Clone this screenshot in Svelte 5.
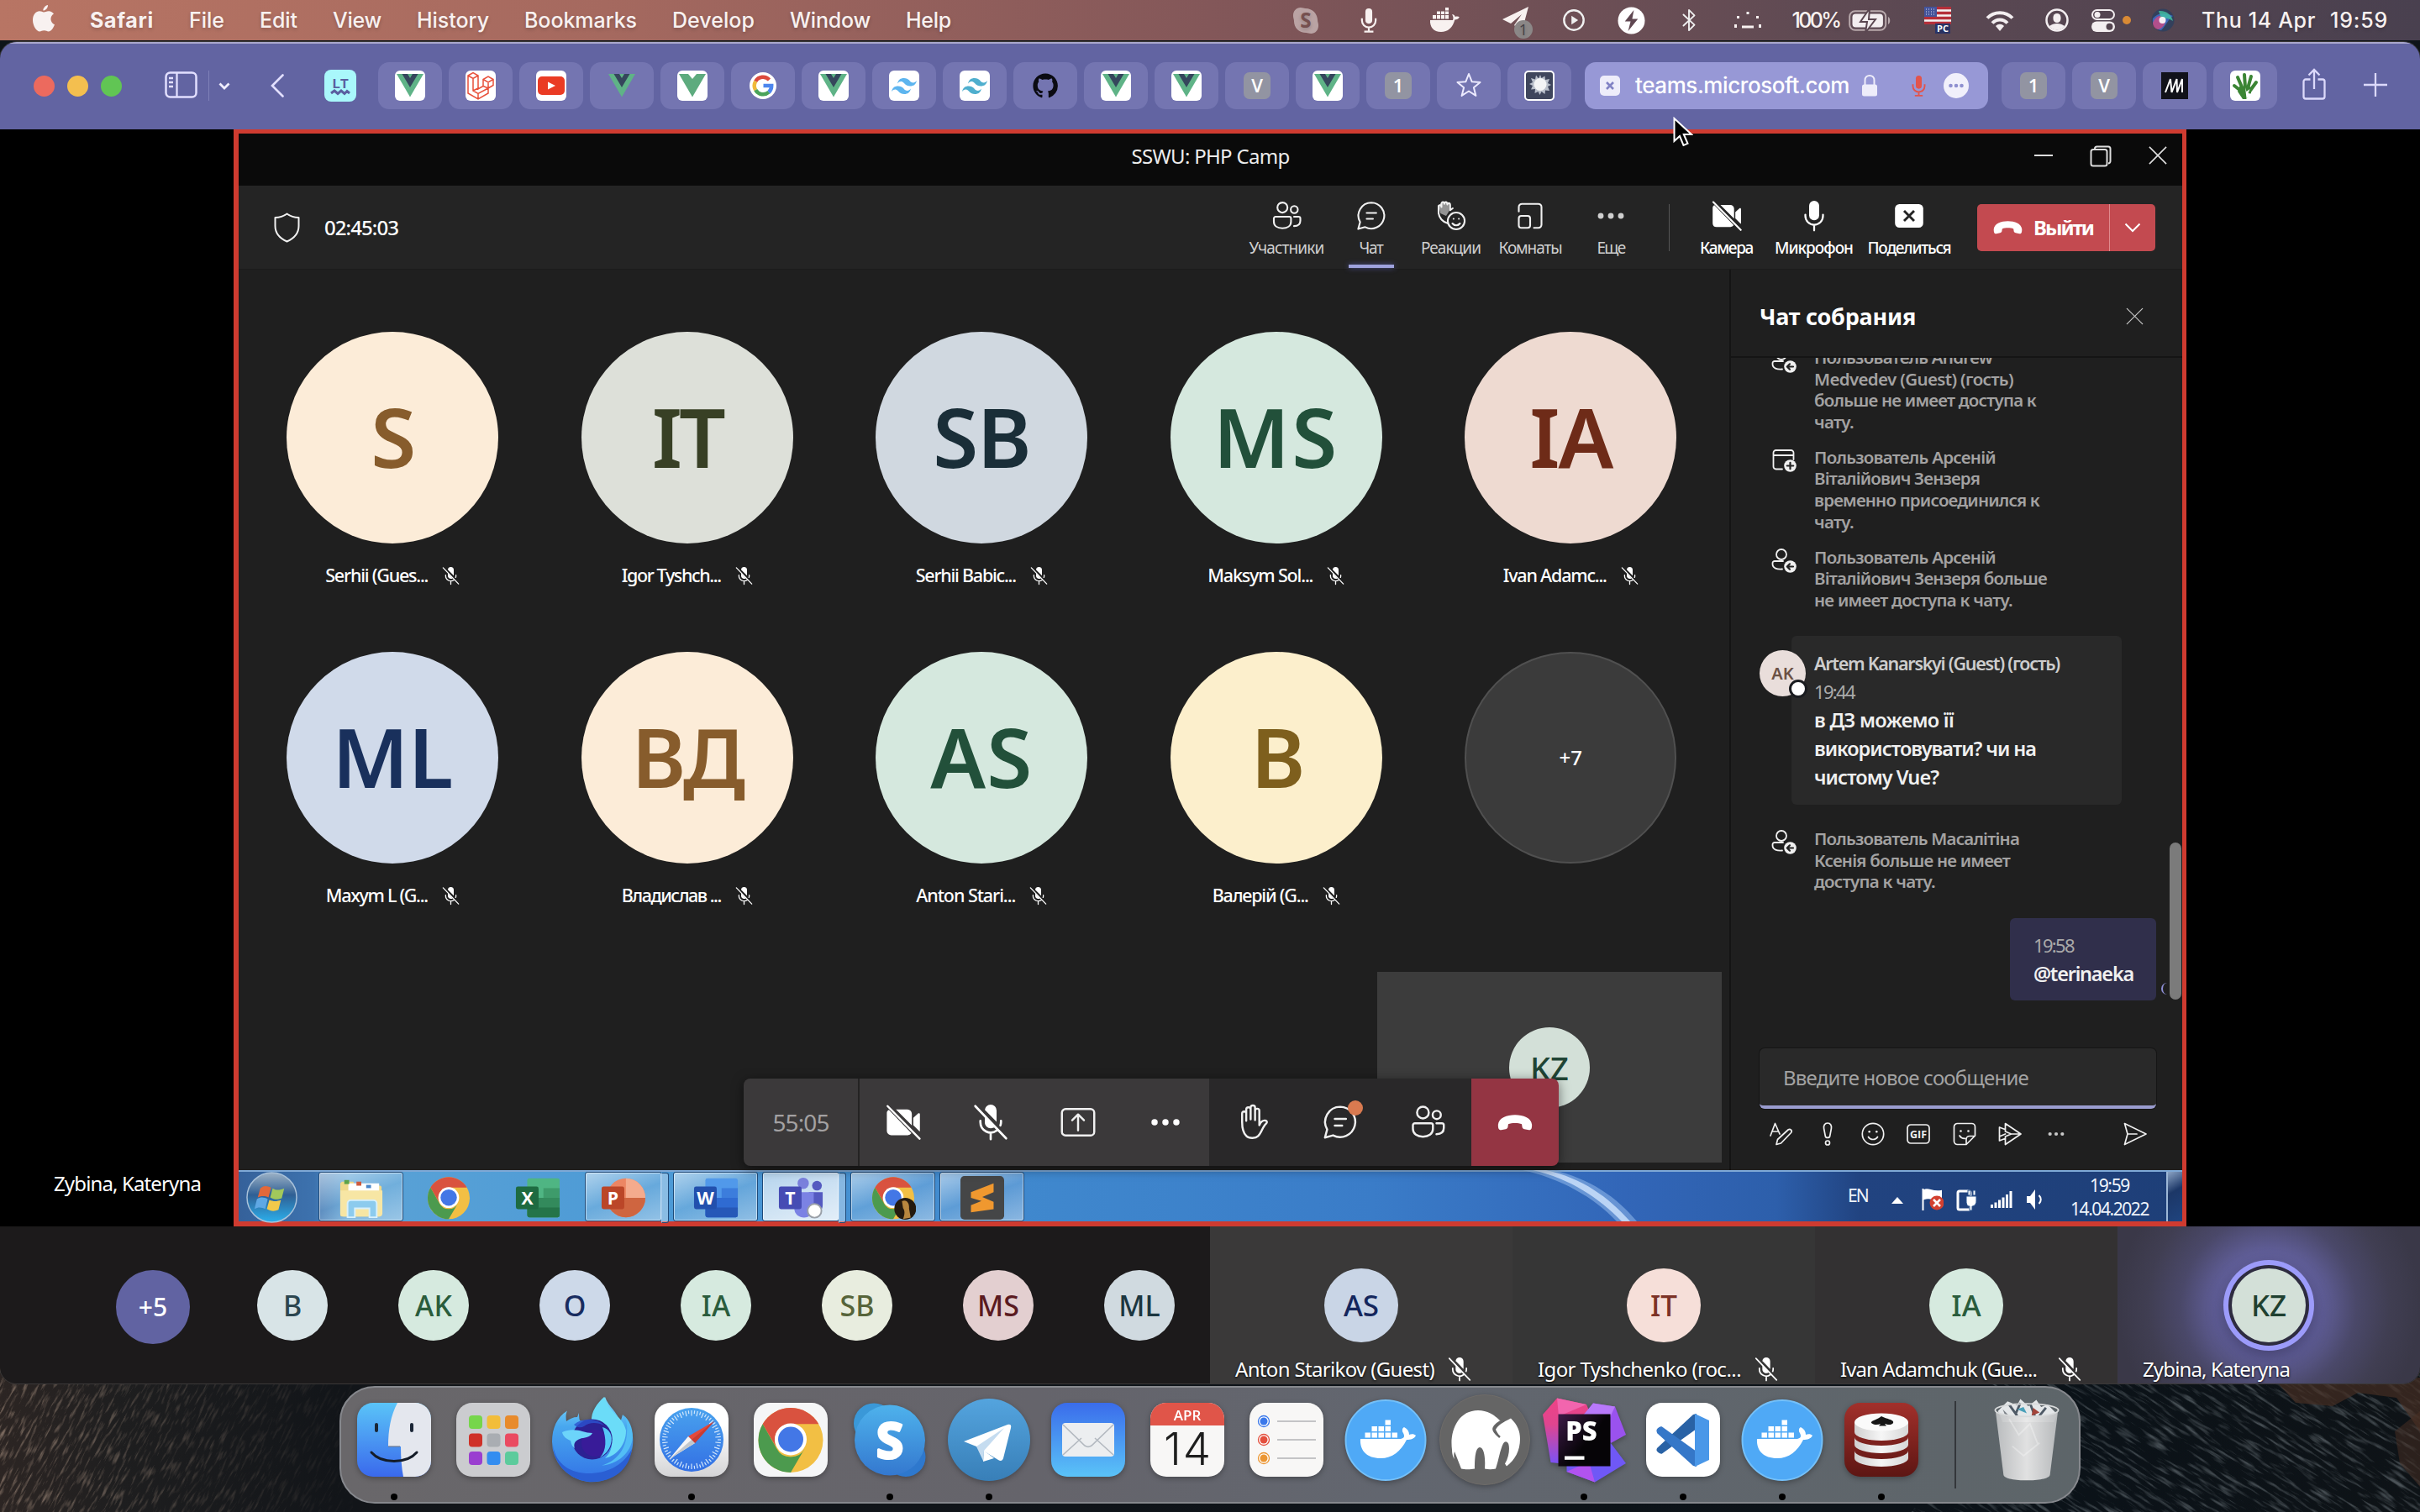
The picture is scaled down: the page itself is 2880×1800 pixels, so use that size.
<script>
  // Spreads a label over a known width by adjusting its letter spacing.
  function fit(node, width) {
    if (!width) return;
    const natural = node.getBoundingClientRect().width;
    const count = node.textContent.length;
    node.style.letterSpacing = `${((width - natural) / count).toFixed(3)}px`;
  }

  const menus = [
    ['File', 42], ['Edit', 45], ['View', 58], ['History', 86],
    ['Bookmarks', 134], ['Develop', 98], ['Window', 96], ['Help', 54]
  ];
  const extras = ['skypeBar', 'mic', 'dockerBar', 'telegramBar', 'playBar', 'boltBar', 'bluetooth', 'dotsFace'];

  const tabs = [
    'vue', 'laravel', 'youtube', 'vueBare', 'vueGreen', 'google', 'vue', 'tailwind', 'tailwindTeal',
    'github', 'vue', 'vue', 'letterV', 'vue', 'letter1', 'star', 'spark'
  ];
  const tabsAfter = ['letter1', 'letterV', 'medium', 'hand'];

  const meetingActions = [
    { icon: 'people', label: 'Участники', w: 89, slot: 100 },
    { icon: 'chat', label: 'Чат', w: 28, slot: 101, active: true },
    { icon: 'reactions', label: 'Реакции', w: 71, slot: 89 },
    { icon: 'rooms', label: 'Комнаты', w: 75, slot: 100 },
    { icon: 'more', label: 'Еще', w: 33, slot: 92 }
  ];
  const deviceActions = [
    { icon: 'cameraOff', label: 'Камера', w: 63, slot: 91 },
    { icon: 'mic', label: 'Микрофон', w: 93, slot: 117 },
    { icon: 'shareX', label: 'Поделиться', w: 99, slot: 110 }
  ];

  const people = [
    { i: 'S', n: 'Serhii (Gues...', w: 122, iw: 52, bg: '#fcecd8', fg: '#875c2c' },
    { i: 'IT', n: 'Igor Tyshch...', w: 118, iw: 84, bg: '#dde0d9', fg: '#384025' },
    { i: 'SB', n: 'Serhii Babic...', w: 119, iw: 116, bg: '#d0d8e0', fg: '#1a2e38' },
    { i: 'MS', n: 'Maksym Sol...', w: 125, iw: 150, bg: '#d5e8de', fg: '#22503a' },
    { i: 'IA', n: 'Ivan Adamc...', w: 123, iw: 98, bg: '#eedad1', fg: '#6e2b18' },
    { i: 'ML', n: 'Maxym L (G...', w: 121, iw: 144, bg: '#d0daea', fg: '#19305c' },
    { i: 'ВД', n: 'Владислав ...', w: 118, iw: 132, bg: '#fcecd8', fg: '#875c2c' },
    { i: 'AS', n: 'Anton Stari...', w: 118, iw: 122, bg: '#d5e8de', fg: '#22503a' },
    { i: 'В', n: 'Валерій (G...', w: 114, iw: 60, bg: '#fcefcc', fg: '#7e5f1d' }
  ];

  const left = { icon: 'personLeft' };
  const log = [
    { ...left, lines: [['Пользователь Andrew', 212], ['Medvedev (Guest) (гость)', 237], ['больше не имеет доступа к', 264], ['чату.', 47]] },
    { icon: 'calendarAdd', lines: [['Пользователь Арсеній', 216], ['Віталійович Зензеря', 197], ['временно присоединился к', 268], ['чату.', 47]] },
    { ...left, lines: [['Пользователь Арсеній', 216], ['Віталійович Зензеря больше', 277], ['не имеет доступа к чату.', 236]] }
  ];
  const lastLog = { ...left, lines: [['Пользователь Масалітіна', 244], ['Ксенія больше не имеет', 233], ['доступа к чату.', 144]] };
  const composer = ['format', 'important', 'smile', 'gif', 'sticker', 'stream', 'more'];

  const strip = [
    { i: 'B', bg: '#d8e4e7', fg: '#2c4650' }, { i: 'AK', bg: '#d6eadf', fg: '#2a5c3c' },
    { i: 'O', bg: '#cdd9e9', fg: '#182c60' }, { i: 'IA', bg: '#d6eadf', fg: '#2a5c3c' },
    { i: 'SB', bg: '#e8eddf', fg: '#56643a' }, { i: 'MS', bg: '#e3cfd0', fg: '#5a1a20' },
    { i: 'ML', bg: '#d0dae0', fg: '#1c3640' }
  ];
  const tiles = [
    { i: 'AS', n: 'Anton Starikov (Guest)', w: 237, bg: '#c9d5e6', fg: '#14265c' },
    { i: 'IT', n: 'Igor Tyshchenko (гос...', w: 242, bg: '#f6dfd9', fg: '#7c3226' },
    { i: 'IA', n: 'Ivan Adamchuk (Gue...', w: 234, bg: '#d6eadf', fg: '#2a5c3c', wide: true },
    { i: 'KZ', n: 'Zybina, Kateryna', w: 175, bg: '#d3e0d8', fg: '#1f4030', speaking: true }
  ];

  const dock = [
    ['finder', 1], ['launchpad', 0], ['firefox', 0], ['safari', 1], ['chrome', 0], ['skype', 1], ['telegram', 1],
    ['mail', 0], ['calendar', 0], ['reminders', 0], ['docker', 0], ['elephant', 0], ['phpstorm', 1],
    ['vscode', 1], ['docker', 1], ['database', 1]
  ];
  const launchColors = ['#76d64b', '#f2bd3a', '#e88b2c', '#cf3128', '#a9adb2', '#ea4a61', '#9a3fd0', '#338df0', '#5ccb9c'];
  const ticks = Array.from({ length: 60 }, (_, k) => k * 6);
  const crates = [[19.5, 35.5], [27.5, 35.5], [35.5, 35.5], [43.5, 35.5], [51.5, 35.5], [27.5, 28], [35.5, 28], [43.5, 28], [43.5, 20.5]];
</script>

{#snippet label(text, w, cls = '')}
  <span class="label {cls}" use:fit={w}>{text}</span>
{/snippet}

{#snippet icon(name)}
  {#if name === 'people'}
    <svg class="icon line" viewBox="0 0 24 24"><circle cx="8.8" cy="5.4" r="4" /><circle cx="18.2" cy="7" r="2.8" /><path d="M3.3 12.7h11a1.3 1.3 0 0 1 1.3 1.3v2.6c0 3.4-3 5.2-6.8 5.2S2 20 2 16.600V14a1.300 1.300 0 0 1 1.300-1.300z" /><path d="M18 12.700h3.700a1.300 1.300 0 0 1 1.300 1.300v1.900c0 2.800-2 4.200-5 4.200" /></svg>
  {:else if name === 'chat'}
    <svg class="icon line" viewBox="0 0 24 24"><path d="M12 1.500a10.300 10.300 0 1 1-4.900 19.400L1.600 22.400l1.500-5.500A10.300 10.300 0 0 1 12 1.500zM8.300 9.700h7.600M8.300 14.300h5" /></svg>
  {:else if name === 'reactions'}
    <svg class="icon line" viewBox="0 0 24 24"><path class="soft" d="M2 3.500 4 2l2-1 2 .5 2.500 1V8L8 12l-4.500-2z" /><path d="M9.500 18C5.500 17 2 13.500 2 9V4M2 5c0-2 2.300-2 2.300 0V2.500c0-2 2.300-2 2.300 0 0-2 2.400-2 2.400.5 0-1.500 2.200-1.500 2.200.5v4l2-1.500" /><circle cx="16" cy="16" r="6.700" /><path d="M13 18c1.500 2 4.500 2 6 0" /><circle class="full" cx="13.900" cy="14.300" r=".7" /><circle class="full" cx="18.100" cy="14.300" r=".7" /></svg>
  {:else if name === 'rooms'}
    <svg class="icon line" viewBox="0 0 24 24"><path d="M3 8.500V5a2.500 2.500 0 0 1 2.500-2.500h13A2.500 2.500 0 0 1 21 5v14a2.500 2.500 0 0 1-2.500 2.500H15" /><rect x="3" y="12" width="9" height="9.500" rx="2" /></svg>
  {:else if name === 'more'}
    <svg class="icon" viewBox="0 0 24 24"><circle cx="4" cy="12" r="2.300" /><circle cx="12" cy="12" r="2.300" /><circle cx="20" cy="12" r="2.300" /></svg>
  {:else if name === 'cameraOff'}
    <svg class="icon" viewBox="0 0 24 24"><path d="M2.200 3.500 17.500 19.400a3 3 0 0 1-2.600 1.400H3.800A3 3 0 0 1 .8 18V5.500c0-.8.500-1.500 1.400-2zM7 3.300h7.800a3 3 0 0 1 3 3v7.900zM18.800 9l3.300-3c.5-.4 1.200-.1 1.200.6v11c0 .3-.1.500-.2.700l-4.300-4.300z" /><path class="slash" d="m1.300 1 21.800 22.200" /></svg>
  {:else if name === 'mic'}
    <svg class="icon" viewBox="0 0 24 24"><rect x="8" y="0" width="8" height="15.500" rx="4" /><path class="stroke" d="M5 11v1a7 7 0 0 0 14 0v-1M12 19v4.500" /></svg>
  {:else if name === 'micBar'}
    <svg class="icon" viewBox="0 0 24 32"><rect x="7.500" y="0" width="9" height="20" rx="4.500" /><path d="M3 13v3a9 9 0 0 0 18 0v-3M12 25v5.500M6 30.500h12" fill="none" stroke="currentColor" stroke-width="2.400" /></svg>
  {:else if name === 'micOff'}
    <svg class="icon" viewBox="0 0 24 24"><path d="M8 4a4 4 0 0 1 8 0v7.700L8.300 3.900zM8 8.600l6.700 6.700c-3 2-6.700 0-6.700-3.300z" /><path class="stroke" d="M5 11v1a7 7 0 0 0 11.200 5.600M19 11v1c0 .8-.1 1.500-.4 2.200M12 19v4.500M1.500 1l21 22" /></svg>
  {:else if name === 'shareX'}
    <svg class="icon" viewBox="0 0 24 24"><rect x=".8" y="2.600" width="22.400" height="18.800" rx="3.500" /><path class="cut" d="m8 8 8 8M16 8l-8 8" /></svg>
  {:else if name === 'shareUp'}
    <svg class="icon line" viewBox="0 0 24 24"><rect x="1" y="3" width="22" height="18" rx="2.500" /><path d="M12 17.500V7M8 10.700 12 6.700l4 4" /></svg>
  {:else if name === 'raise'}
    <svg class="icon line" viewBox="0 0 24 24"><path d="M4.700 12V6.200c0-2 2.800-2 2.800 0V11 3.300c0-2 3-2 3 0V10 2c0-1.900 3-1.900 3 0v8.500-6.300c0-1.900 2.900-1.900 2.900 0V14c.8-1.900 2.200-3.400 4-3.200 1.400.2 1.500 1.400.5 2.300-2.400 2.200-3 6.200-5.300 8.300-1.600 1.600-6 2-8 0-2-2-2.900-5.400-2.900-9.400z" /></svg>
  {:else if name === 'phone'}
    <svg class="icon" viewBox="0 0 24 24"><path d="M12 7C6.500 7 1 9 .5 13.500c-.1 1.600.3 2.800.3 2.800.3.8 1 1.100 1.800 1l3-.6c.8-.1 1.400-.7 1.500-1.400l.3-2c2.400-1 6.800-1 9.200 0l.3 2c.1.700.7 1.300 1.500 1.400l3 .6c.8.100 1.500-.2 1.800-1 0 0 .4-1.200.3-2.800C23 9 17.500 7 12 7z" /></svg>
  {:else if name === 'personLeft'}
    <svg class="icon line" viewBox="0 0 30 30"><circle cx="12" cy="7" r="6" /><path d="M13 24.500C7 25 1.500 23.500 1.500 18.500v-1A2.500 2.500 0 0 1 4 15h10" /><circle class="full" cx="22.500" cy="21.500" r="7.300" /><path class="cut" d="M26 21.500h-7m3-3.200-3.200 3.200 3.200 3.200" /></svg>
  {:else if name === 'calendarAdd'}
    <svg class="icon line" viewBox="0 0 30 30"><path d="M13 24.500H5.500A3 3 0 0 1 2.500 21.500V5A3 3 0 0 1 5.500 2h18a3 3 0 0 1 3 3v8M2.500 8h24" /><circle class="full" cx="22.500" cy="20.500" r="7.300" /><path class="cut" d="M22.500 16.800v7.400m-3.700-3.700h7.400" /></svg>
  {:else if name === 'format'}
    <svg class="icon line" viewBox="0 0 28 28"><path d="M1 16 6.500 1.500 12 14M3.200 11h7.500M8 26.500l1.500-6L22 9c2.500-2 5.500 1 3.500 3.500L13.500 25z" /></svg>
  {:else if name === 'important'}
    <svg class="icon line" viewBox="0 0 28 28"><path d="M14 1c3.500 0 5 3 4.400 6.500l-1.700 9c-.5 2.600-4.900 2.600-5.400 0l-1.700-9C9 4 10.500 1 14 1z" /><circle cx="14" cy="24.500" r="2.500" /></svg>
  {:else if name === 'smile'}
    <svg class="icon line" viewBox="0 0 28 28"><circle cx="14" cy="14" r="12.700" /><path d="M8.500 17.500c2.500 4 8.500 4 11 0" /><circle class="full" cx="9.700" cy="11.300" r="1.300" /><circle class="full" cx="18.300" cy="11.300" r="1.300" /></svg>
  {:else if name === 'gif'}
    <svg class="icon line" viewBox="0 0 28 28"><rect x="1" y="3" width="26" height="22" rx="4" /><text class="svgtext" x="14" y="18.500" font-size="12.500" font-weight="700" textLength="20">GIF</text></svg>
  {:else if name === 'sticker'}
    <svg class="icon line" viewBox="0 0 28 28"><path d="M16 26.500H5.500A4 4 0 0 1 1.500 22.500V5.500A4 4 0 0 1 5.500 1.500h17a4 4 0 0 1 4 4V16zM26 16.500h-6a4 4 0 0 0-4 4V26M8 16c1.500 2.500 4 3.500 6.500 3.300" /><circle class="full" cx="9.500" cy="10.500" r="1.300" /><circle class="full" cx="18.500" cy="10.500" r="1.300" /></svg>
  {:else if name === 'stream'}
    <svg class="icon line" viewBox="0 0 28 28"><path d="M8.500 11V1.500L27 14 8.500 26.500V17l7-3H26M15.500 14 8.500 11M8 8.500 1.500 6v16l6.500-2.500M1.500 17l7-3" /></svg>
  {:else if name === 'send'}
    <svg class="icon line" viewBox="0 0 28 28"><path d="M1.500 1.500 27 14 1.500 26.500 5 14zM5 14h11" /></svg>
  {:else if name === 'shield'}
    <svg class="icon line" viewBox="0 0 32 36"><path d="M16 1.500c4 3 8.500 4.500 14 4.500v10c0 9-5 14.500-14 18.500C7 30.500 2 25 2 16V6c5.500 0 10-1.500 14-4.500z" /></svg>
  {:else if name === 'close'}
    <svg class="icon line" viewBox="0 0 24 24"><path d="m1.500 1.500 21 21M22.500 1.500l-21 21" /></svg>
  {:else if name === 'skypeBar'}
    <svg class="icon" viewBox="0 0 34 34"><path d="M10 1c3 0 4 1 6 1 9 0 15 7 15 15 0 2 1 3 1 6 0 6-4 10-9 10-3 0-4-1-6-1C8 32 2 26 2 17c0-2-1-3-1-6C1 5 5 1 10 1z" opacity=".5" /><text class="svgtext dim" x="16.500" y="26" font-size="25" font-weight="700">S</text></svg>
  {:else if name === 'dockerBar'}
    <svg class="icon" viewBox="0 0 36 30"><path d="M1 15h27c1-2 .5-5-1-6.500 1.500-.8 3 .2 3.800 2.500 1.500-.6 4-.5 5 .2-1 2.300-3 3.200-5.500 3.300C28 24 22 29 14 29 5 29 .5 23 1 15z" /><path d="M4 9h4v4.500H4zM9 9h4v4.500H9zM14 9h4v4.500h-4zM19 9h4v4.500h-4zM9 4.500h4V8H9zM14 4.500h4V8h-4zM19 4.500h4V8h-4zM19 0h4v3.500h-4z" /></svg>
  {:else if name === 'telegramBar'}
    <svg class="icon" viewBox="0 0 40 40"><path d="M2 16 33 1 25 31l-9-8 9-13-13 11z" /><circle cx="27" cy="28" r="11" fill="#8b8787" /><text class="svgtext" x="27" y="34.500" font-size="18" fill="#443f45">1</text></svg>
  {:else if name === 'playBar'}
    <svg class="icon line" viewBox="0 0 30 30"><circle cx="15" cy="15" r="12.500" stroke-width="2.600" /><path class="full" d="m12 9.500 8.500 5.500-8.500 5.500z" /></svg>
  {:else if name === 'boltBar'}
    <svg class="icon" viewBox="0 0 34 34"><circle cx="17" cy="17" r="16.500" fill="#fff" /><path d="m20 4-11 14h7l-3 12L25 15h-7z" fill="#5f4751" /></svg>
  {:else if name === 'bluetooth'}
    <svg class="icon line" viewBox="0 0 20 30"><path d="m3 8 14 13-7 7V2l7 7L3 22" stroke-width="2" /></svg>
  {:else if name === 'dotsFace'}
    <svg class="icon" viewBox="0 0 32 20"><path d="M9 16.500h14v3H9zM0 15h3v4H0zM29 15h3v4h-3zM3 5h3v3H3zM26 5h3v3h-3zM14.500 0h3v3h-3z" /></svg>
  {:else if name === 'vue' || name === 'vueBare' || name === 'vueGreen'}
    <svg class="fav" viewBox="0 0 36 36">
      {#if name !== 'vueBare'}<rect width="36" height="36" rx="6" fill="#fff" />{/if}
      <path d="M2 4h32L18 31.500z" fill={name === 'vueGreen' ? '#5dab7e' : '#5fb387'} />
      {#if name === 'vueGreen'}<path d="M13 4h10l-5 6z" fill="#fff" />{:else}<path d="M8.500 4H15l3 5 3-5h6.500L18 20z" fill="#35465c" />{/if}
    </svg>
  {:else if name === 'laravel'}
    <svg class="fav" viewBox="0 0 36 36"><rect width="36" height="36" rx="6" fill="#fff" /><path d="m3 6 6-3.500L15 6v16l6-3.500v-8l6-3.500 6 3.500v7L27 21v6l-12 7-12-7zM3 6l6 3.500L15 6M9 9.500V24l6 3.500L27 21M21 10.500l6 3.500 6-3.500M27 14v7M15 34v-6.500M9 24l6-3M21 18.500l6 2.500" fill="none" stroke="#e8503a" stroke-width="1.500" /></svg>
  {:else if name === 'youtube'}
    <svg class="fav" viewBox="0 0 36 36"><rect width="36" height="36" rx="6" fill="#fff" /><rect x="2" y="7" width="32" height="22" rx="5" fill="#ea3b24" /><path d="m14 13.500 9 4.500-9 4.500z" fill="#fff" /></svg>
  {:else if name === 'google'}
    <svg class="fav" viewBox="0 0 36 36"><circle cx="18" cy="18" r="16" fill="#fff" /><g fill="none" stroke-width="4.500"><path d="M25.500 11A10.300 10.300 0 0 0 9.200 12.800" stroke="#dc4a3d" /><path d="M9.200 12.800a10.300 10.300 0 0 0 0 10.400" stroke="#f0b93a" /><path d="M9.200 23.200a10.300 10.300 0 0 0 15.800 2.500" stroke="#4ba35a" /><path d="M18.500 18h9.700c0 3.500-1.200 6-3.200 7.700" stroke="#4d86ee" /></g></svg>
  {:else if name === 'tailwind' || name === 'tailwindTeal'}
    <svg class="fav" viewBox="0 0 36 36"><rect width="36" height="36" rx="6" fill="#fff" /><g fill={name === 'tailwind' ? '#5db5ef' : '#4fafce'}><path d="M10 15.500c1-4.500 3.700-6.500 7.800-6.500 6.200 0 6.700 4.500 9.700 5.300 2 .5 4-.3 5.500-2.300-1 4.500-3.700 6.500-7.800 6.500-6.200 0-6.700-4.500-9.700-5.300-2-.5-4 .3-5.500 2.300z" /><path d="M3 25c1-4.500 3.700-6.500 7.800-6.500 6.200 0 6.700 4.500 9.700 5.300 2 .5 4-.3 5.500-2.300-1 4.500-3.700 6.500-7.800 6.500-6.200 0-6.700-4.500-9.700-5.300-2-.5-4 .3-5.500 2.300z" /></g></svg>
  {:else if name === 'github'}
    <svg class="fav" viewBox="0 0 16 16"><path transform="translate(1.500 1.500) scale(.82)" fill="#0b0b12" d="M8 0C3.580 0 0 3.580 0 8c0 3.540 2.290 6.530 5.470 7.590.4.070.55-.17.55-.38 0-.19-.01-.82-.01-1.490-2.010.37-2.530-.49-2.690-.94-.09-.23-.48-.94-.82-1.130-.28-.15-.68-.52-.01-.53.63-.01 1.080.58 1.230.82.72 1.210 1.870.87 2.330.66.07-.52.28-.87.51-1.070-1.780-.2-3.640-.89-3.640-3.950 0-.87.31-1.590.82-2.150-.08-.2-.36-1.020.08-2.120 0 0 .67-.21 2.200.82.640-.18 1.320-.27 2-.27s1.360.09 2 .27c1.530-1.040 2.200-.82 2.200-.82.440 1.100.16 1.920.08 2.120.510.560.820 1.270.820 2.150 0 3.070-1.870 3.750-3.650 3.950.290.250.540.730.540 1.480 0 1.070-.01 1.930-.01 2.200 0 .210.150.460.550.380A8.010 8.010 0 0 0 16 8c0-4.420-3.580-8-8-8z" /></svg>
  {:else if name === 'letterV' || name === 'letter1'}
    <svg class="fav" viewBox="0 0 36 36"><rect x="2" y="2" width="32" height="32" rx="7" fill="#9294a2" /><text class="svgtext light" x="18" y="26" font-size="22" font-weight="600">{name === 'letterV' ? 'V' : '1'}</text></svg>
  {:else if name === 'star'}
    <svg class="fav" viewBox="0 0 36 36"><path d="m18 4 3.700 9.300 9.800.6-7.600 6.300 2.500 9.700L18 24.500l-8.400 5.400 2.500-9.700-7.600-6.300 9.800-.6z" fill="none" stroke="#eceaff" stroke-width="2" stroke-linejoin="round" /></svg>
  {:else if name === 'spark'}
    <svg class="fav" viewBox="0 0 36 36"><rect x="1" y="1" width="34" height="34" rx="4" fill="#3f465c" stroke="#fff" stroke-width="2" /><path d="m19 5 1.500 4 4-2.500L25 11l5-1-2 5 4 2-4 2 2 5-5-.5-.5 4.500-4-3-2 4-2-4-4 2 .5-5-5 .5 2-4.500L6 16l4-2-2-5 5 1.500 1-5 3 4z" fill="#b9bfca" /><circle cx="19" cy="16.500" r="7.500" fill="#f3f4f5" /></svg>
  {:else if name === 'medium'}
    <svg class="fav" viewBox="0 0 36 36"><rect x="2" y="2" width="32" height="32" fill="#11121a" /><path d="m7 26 6-16 1.500 16 6-16 .5 16 6-16v16" fill="none" stroke="#fff" stroke-width="2" stroke-linejoin="bevel" /></svg>
  {:else if name === 'hand'}
    <svg class="fav" viewBox="0 0 36 36"><rect width="36" height="36" rx="6" fill="#fff" /><g fill="none" stroke="#3b8534" stroke-width="4" stroke-linecap="round"><path d="M15 22 9 8M18 20 17 5M21 21l4-14M23 25l8-11M14 25l-9-7" /></g><path d="M11 19h13l1 8-6 7h-4l-6-9z" fill="#3b8534" /><path d="m18 20 1.500 5 4-3-2 5 5 1-7 5z" fill="#fff" /></svg>
  {/if}
{/snippet}

{#snippet chromeMark()}
  <circle cx="44" cy="44.500" r="38.500" fill="#f2bf44" />
  <path d="M10.700 25.200A38.500 38.500 0 0 1 77.300 25.200H44a19.300 19.300 0 0 0-17 28z" fill="#d9523f" />
  <path d="M10.700 25.200A38.500 38.500 0 0 0 44 83l17-29a19 19 0 0 1-34 0z" fill="#4c9a4e" />
  <circle cx="44" cy="43.500" r="19" fill="#fff" /><circle cx="44" cy="43.500" r="15" fill="#4377e6" />
{/snippet}

{#snippet office(letter, dark, a, b)}
  <svg class="task-icon" viewBox="0 0 56 52">
    <rect x="15" y="2" width="40" height="48" rx="2.500" fill={a} /><path d="M15 26h40v21.500a2.500 2.500 0 0 1-2.500 2.500h-35a2.500 2.500 0 0 1-2.500-2.500z" fill={b} /><path d="M35 14h20v12H35z" fill={b} opacity=".6" /><path d="M15 38h40v9.500a2.500 2.500 0 0 1-2.500 2.500h-35a2.500 2.500 0 0 1-2.500-2.500z" fill={dark} opacity=".7" />
    <rect x="1" y="12" width="28" height="28" rx="2.500" fill={dark} /><text class="svgtext light" x="15" y="34" font-size="22" font-weight="700">{letter}</text>
  </svg>
{/snippet}

{#snippet dockIcon(name)}
  <svg class="app" viewBox="-6 -6 100 100">
    {#if name === 'finder'}
      <rect width="88" height="88" rx="19" fill="url(#gFinder)" /><path d="M48 0h21a19 19 0 0 1 19 19v50a19 19 0 0 1-19 19H55c-2-10-3-22-3-36H37c0-20 3-37 11-52z" fill="#e4e7ee" /><path d="M23 26v7M65 26v7" stroke="#1a2636" stroke-width="4" stroke-linecap="round" /><path d="M17 59c12 14 42 14 54 0" fill="none" stroke="#141c28" stroke-width="3" stroke-linecap="round" /><path d="M37 52h14" fill="none" stroke="#6d7a90" stroke-width="1.200" />
    {:else if name === 'launchpad'}
      <rect width="88" height="88" rx="19" fill="#cbcccf" />
      {#each launchColors as color, k}<rect x={15 + (k % 3) * 21.5} y={15 + Math.floor(k / 3) * 21.5} width="16" height="16" rx="4" fill={color} />{/each}
    {:else if name === 'firefox'}
      <path d="M14 9.500C12 14 12.500 18 13 22c4-3 8-5 13-5l2-5c0 3 0 6 1 9l15 2c3-11 7-22 15-30 4 12 15 17 18 31l3-10c12 12 15 30 10 46A48 48 0 0 1-4 46C-4 30 2 17 14 9.500z" fill="url(#gFox)" />
      <path d="M-3 50c3 24 22 34 43 34 20 0 40-8 51-29-3 25-23 39-47 39S-2 76-3 50z" fill="#2a5fd3" />
      <path d="M58-7c-8 7-16 18-15 29 12 2 20 9 23 18 3 10 0 20-7 26 14-3 25-16 25-33C80 15 64 13 58-7z" fill="#6bdcf8" />
      <path d="M81 14.500c4 6 5 14 4 22-1 20-14 34-30 38 20-1 35-16 37-33 0-12-4-21-11-27z" fill="#52bdf5" />
      <circle cx="43.700" cy="43.500" r="24" fill="#2c2193" /><circle cx="47" cy="48" r="16" fill="#41189b" opacity=".6" />
      <path d="M56 29c8 2 13 10 10 20-2 7-6 12-13 16 8-8 8-22 3-36z" fill="#55c7f7" />
      <path d="M8 35c8-4 18-3 24-1 4 1 8 2 12 2-3 6-10 5-15 7-5 2-8 5-6 11-4-3-4-6-5-9-5-2-9-5-10-10z" fill="#6cd4fa" />
      <path d="M22 26c6-5 13-7 21-6 7 1 11 3 15 7-8-4-18-4-24 1-4 2-8 2-12-2z" fill="#2c53cf" opacity=".8" />
    {:else if name === 'safari'}
      <rect width="88" height="88" rx="19" fill="url(#gPaper)" /><circle cx="44" cy="44" r="38" fill="url(#gSafari)" />
      {#each ticks as deg}<path d={deg % 12 ? 'M44 9v4' : 'M44 9v6.500'} stroke="#d3e7fb" stroke-width="1.200" transform="rotate({deg} 44 44)" />{/each}
      <path d="M71 22 48 48l-8-8z" fill="#e5493b" /><path d="M17.500 67 40 40l8 8z" fill="#f4f4f6" /><path d="M17.500 67 44 44l4 4z" fill="#c3c7cc" /><path d="M71 22 44 44l4 4z" fill="#b8332c" opacity=".6" />
    {:else if name === 'chrome'}
      <rect width="88" height="88" rx="19" fill="#f5f6f7" />{@render chromeMark()}
    {:else if name === 'skype'}
      <circle cx="25" cy="24.500" r="24" fill="#3a98d8" /><circle cx="63" cy="64.500" r="23.500" fill="#2e78cd" /><circle cx="44" cy="44.500" r="42" fill="url(#gSkype)" /><text class="svgtext light fat" x="44" y="66" font-size="59" font-weight="700">S</text>
    {:else if name === 'telegram'}
      <circle cx="44" cy="44" r="49" fill="url(#gTele)" /><path d="M14 46 66 26c3-1 5 0 4 4l-9 36c-1 3-3 4-6 2L29 52z" fill="#fff" /><path d="m29 52 33-22-24 27-1 12z" fill="#c5dcf0" /><path d="m38 57 12 9-13 4z" fill="#fff" />
    {:else if name === 'mail'}
      <rect width="88" height="88" rx="19" fill="url(#gMail)" /><rect x="13" y="24" width="62" height="40" rx="4" fill="#eceef0" /><path d="m14 62 22-20M74 62 52 42M14 26l26 25c3 2 5 2 8 0l26-25" fill="none" stroke="#b3b9c0" stroke-width="1.600" />
    {:else if name === 'calendar'}
      <rect width="88" height="88" rx="19" fill="#f8f7f6" /><path d="M0 27v-8A19 19 0 0 1 19 0h50a19 19 0 0 1 19 19v8z" fill="#e05549" /><text class="svgtext light" x="44" y="20.500" font-size="17" font-weight="600">APR</text><text class="svgtext ink" x="44" y="74" font-size="53" font-weight="300" textLength="56">14</text>
    {:else if name === 'reminders'}
      <rect width="88" height="88" rx="19" fill="#f8f7f6" />
      {#each ['#3b78ea', '#e4503e', '#eb9633'] as c, k}<circle cx="17" cy={22 + k * 22} r="6.500" fill="#fff" stroke={c} stroke-width="1.300" /><circle cx="17" cy={22 + k * 22} r="4.500" fill={c} /><path d="M33 {22 + k * 22}h46" stroke="#c4c4c6" stroke-width="1.800" />{/each}
    {:else if name === 'docker'}
      <circle cx="44" cy="44.500" r="47.500" fill="#4fa9f6" stroke="#74c0f9" stroke-width="2" /><path d="M14 43h48c4-1 5-3 3-7-2-3-1-6 1-7 4 2 6 5 6 9 3-1 6-1 8 1-2 4-6 5-11 5-7 14-17 22-31 22-16 0-25-9-24-23z" fill="#fff" />
      {#each crates as [x, y]}<rect {x} {y} width="6.500" height="6" fill="#fff" />{/each}
    {:else if name === 'elephant'}
      <circle cx="44" cy="44" r="53.500" fill="#656565" stroke="#6f6c69" stroke-width="1" /><path d="M5 56C2 34 12 9 36 9c11 0 19 5 27 13-5 2-9 6-9 10 1 4 4 7 8 9l-5-9c2-5 9-9 18-13.500 8 8 11 15 11 24.500 0 14-6 25-16 32.500l-2-3c5-8 6-19 4-24-2-3-4-3-6 0-4 8-5 18-9 30-4 1-9 1-13 0 1-14-1-25-6-25.500-5 .500-6 12-6 25.500-5 1-12 1-16 0L8 58c-1 4-1 6 0 9-2-2-3-7-3-11z" fill="#fff" /><path d="M63 22c-5 3-9 7-8.500 10 1 3 4 6 7.500 9" fill="none" stroke="#656565" stroke-width="2.500" />
    {:else if name === 'phpstorm'}
      <path d="M-5 14 12-5.500 47 2l6 14-39 56-9.500-1z" fill="url(#gPs)" /><path d="M12-5.500 47 2 14 16z" fill="#f265ae" /><path d="M55 .5 81 4.500 94 38 76 48 40 20z" fill="#9a52ee" /><path d="M55 .5 81 4.500 70 28 42 16z" fill="#b879fa" /><path d="M76 48 94 72 57 94.500 23.500 82V70z" fill="#6f58f6" /><path d="M23.500 82 50 70l7 24.500z" fill="#b153ef" /><rect x="13.500" y="13.500" width="62" height="62" fill="url(#gInk)" /><text class="svgtext light" x="41" y="44.500" font-size="31" font-weight="800">PS</text><path d="M21 63.500h23.500v4.300H21z" fill="#fff" />
    {:else if name === 'vscode'}
      <rect width="88" height="88" rx="19" fill="#fff" /><path d="M19 60.500c-2 1-6-2-6.500-4 0-1 0-2 1-3L56 14l4-1v18z" fill="#2962a5" /><path d="M19 28.500c-2-1-6 2-6.500 4 0 1 0 3 1 4L56 75l4 1V58z" fill="#3577c8" /><path d="m58 13 17 8v47l-17 8z" fill="#4997e8" />
    {:else if name === 'database'}
      <rect width="88" height="88" rx="19" fill="url(#gDb)" />
      <path d="M12 57a32 10 0 0 0 64 0v9a32 10 0 0 1-64 0zM12 41a32 10 0 0 0 64 0v9a32 10 0 0 1-64 0z" fill="url(#gDisk)" /><path d="M12 23v12a32 10 0 0 0 64 0V23z" fill="url(#gDisk)" /><ellipse cx="44" cy="23" rx="32" ry="10.500" fill="#fafafa" /><path d="M44 16c5 3 16 4 14 8-2 3-7 2-10 1l2 2.500h-9l2-2.500c-4 2-9 1-11-1-1-3 8-4 12-8z" fill="#151515" />
    {/if}
  </svg>
{/snippet}

{#snippet systemNote(m)}
  <div class="note">
    <div class="note-icon">{@render icon(m.icon)}</div>
    <div class="note-text">
      {#each m.lines as [text, w]}<div>{@render label(text, w)}</div>{/each}
    </div>
  </div>
{/snippet}

<div class="screen">
  <svg class="wallpaper" viewBox="0 0 2880 180" preserveAspectRatio="none">
    <defs>
      <linearGradient id="gWall"><stop offset="0" stop-color="#2c2523" /><stop offset=".05" stop-color="#1e1e1f" /><stop offset=".14" stop-color="#121519" /><stop offset=".86" stop-color="#0b1218" /><stop offset="1" stop-color="#0e1317" /></linearGradient>
      <filter id="grainWarm" x="0" y="0" width="100%" height="100%"><feTurbulence type="fractalNoise" baseFrequency=".05 .3" numOctaves="3" seed="8" /><feColorMatrix values="0 0 0 0 .58  0 0 0 0 .42  0 0 0 0 .32  3.200 0 0 0 -1.600" /></filter>
      <filter id="grainCold" x="0" y="0" width="100%" height="100%"><feTurbulence type="fractalNoise" baseFrequency=".03 .25" numOctaves="3" seed="3" /><feColorMatrix values="0 0 0 0 .3  0 0 0 0 .35  0 0 0 0 .38  3 0 0 0 -1.500" /></filter>
      <linearGradient id="gFade"><stop offset="0" stop-color="#fff" /><stop offset=".5" stop-color="#777" /><stop offset="1" stop-color="#111" /></linearGradient>
      <mask id="fade"><rect width="420" height="180" fill="url(#gFade)" /></mask>
      <linearGradient id="gFinder" x2="0" y2="1"><stop offset="0" stop-color="#5ac4f8" /><stop offset="1" stop-color="#3a69ec" /></linearGradient>
      <linearGradient id="gFox" x2="0" y2="1"><stop offset="0" stop-color="#7fdcfb" /><stop offset=".35" stop-color="#48a7ef" /><stop offset="1" stop-color="#3272e6" /></linearGradient>
      <linearGradient id="gSafari" x2="0" y2="1"><stop offset="0" stop-color="#49a2ee" /><stop offset="1" stop-color="#3370e4" /></linearGradient>
      <linearGradient id="gPaper" x2="0" y2="1"><stop offset=".3" stop-color="#fff" /><stop offset="1" stop-color="#d4d4d6" /></linearGradient>
      <linearGradient id="gSkype" x2="0" y2="1"><stop offset="0" stop-color="#4eb2ec" /><stop offset="1" stop-color="#3478cf" /></linearGradient>
      <linearGradient id="gTele" x2="0" y2="1"><stop offset="0" stop-color="#54a4de" /><stop offset="1" stop-color="#387fb8" /></linearGradient>
      <linearGradient id="gMail" x2="0" y2="1"><stop offset="0" stop-color="#3a6ceb" /><stop offset="1" stop-color="#5ac3f8" /></linearGradient>
      <linearGradient id="gDb" x2="0" y2="1"><stop offset="0" stop-color="#a2302b" /><stop offset="1" stop-color="#5d1613" /></linearGradient>
      <linearGradient id="gDisk"><stop offset="0" stop-color="#cfcfcf" /><stop offset=".5" stop-color="#f6f6f6" /><stop offset="1" stop-color="#d6d6d6" /></linearGradient>
      <linearGradient id="gPs" x2="0" y2="1"><stop offset="0" stop-color="#ee4386" /><stop offset=".4" stop-color="#e0458f" /><stop offset="1" stop-color="#7b52f6" /></linearGradient>
      <linearGradient id="gInk" x2="1" y2=".8"><stop offset="0" stop-color="#3d1a48" /><stop offset=".6" stop-color="#060407" /></linearGradient>
      <linearGradient id="gTrash"><stop offset="0" stop-color="#bfc1c3" /><stop offset=".5" stop-color="#e9e9e9" /><stop offset="1" stop-color="#bcbec0" /></linearGradient>
      <linearGradient id="gOrb" x2="0" y2="1"><stop offset="0" stop-color="#9db2c6" /><stop offset=".45" stop-color="#2f5f94" /><stop offset="1" stop-color="#2bb0ec" /></linearGradient>
    </defs>
    <rect width="2880" height="180" fill="url(#gWall)" />
    <g mask="url(#fade)"><g transform="rotate(-62 200 90)"><rect x="-200" y="-300" width="800" height="800" filter="url(#grainWarm)" opacity=".5" /></g></g>
    <g transform="rotate(32 2650 90)"><rect x="2380" y="-200" width="540" height="600" filter="url(#grainCold)" opacity=".45" /></g>
    <path d="m2712 28 20 22 44 4 30-16 46 6 28 40V20z" fill="#4a3023" opacity=".65" /><path d="m2850 84 30-24v90l-24-28z" fill="#4a3023" opacity=".5" />
  </svg>

  <header class="menubar">
    <svg class="apple" viewBox="0 0 26 32"><path d="M18 0c.2 3-2.400 6.500-5.600 6.600C12 3.800 15 .5 18 0zM13 8.500c1.500 0 3.300-1.300 6-1.300 2.500 0 4.700 1.300 6 3.300-5.300 3-4.300 10.500 1 12.700-1.500 4-4.200 8.300-7.200 8.300-2 0-3-1.200-5.300-1.200-2.400 0-3.500 1.200-5.300 1.200C4.500 31.500 0 24.500 0 18c0-7 4.200-10.700 8-10.700 2.300 0 3.700 1.200 5 1.200z" /></svg>
    {@render label('Safari', 76, 'strong')}
    {#each menus as [name, w]}{@render label(name, w)}{/each}
    <div class="extras">
      {#each extras as name}<div class="extra {name}">{@render icon(name === 'mic' ? 'micBar' : name)}</div>{/each}
      <div class="extra battery">
        {@render label('100%', 57)}
        <svg viewBox="0 0 50 25"><rect x="1.200" y="1.200" width="43" height="22.600" rx="6.500" fill="none" stroke="#b8a9ac" stroke-width="2" /><rect x="4.500" y="4.500" width="36.400" height="16" rx="4" fill="#f3eef0" /><path d="M47 8c3 1.500 3 7.500 0 9z" fill="#b8a9ac" /><path d="M25-2 14 14h8l-2 13 12-16h-8z" fill="#f3eef0" stroke="#5b4751" stroke-width="2" /></svg>
      </div>
      <svg class="flag" viewBox="0 0 32 32"><rect width="32" height="21" fill="#b5303a" /><path d="M0 4.500h32M0 10.500h32M0 16.500h32" stroke="#f2f2f2" stroke-width="2.600" /><rect width="15" height="12" fill="#44549b" /><path d="M2 3h12M2 6h12M2 9h12" stroke="#dfe3f3" stroke-width="1" stroke-dasharray="1 2" /><rect x="13" y="20" width="18" height="12" fill="#2b3568" /><text class="svgtext light" x="22" y="30" font-size="11" font-weight="700">PC</text></svg>
      <svg class="wifi" viewBox="0 0 34 25"><g fill="none" stroke="#f3eef0" stroke-width="4"><path d="M2 9.500C10 1 24 1 32 9.500M8 15.500c5-5.500 13-5.500 18 0" /></g><path d="M12 19c3-3 7-3 10 0l-5 6z" fill="#f3eef0" /></svg>
      <svg class="user" viewBox="0 0 28 28"><circle cx="14" cy="14" r="12.500" fill="none" stroke="#f3eef0" stroke-width="2.500" /><rect x="9.500" y="6" width="9" height="11" rx="4.500" fill="#f3eef0" /><path d="M5 21c5-4 13-4 18 0-4 6-14 6-18 0z" fill="#f3eef0" /></svg>
      <svg class="toggles" viewBox="0 0 28 27"><rect x="1" y="1" width="26" height="11" rx="5.500" fill="none" stroke="#f3eef0" stroke-width="2" /><circle cx="7" cy="6.500" r="3.500" fill="#f3eef0" /><rect y="14.500" width="28" height="12.500" rx="6.200" fill="#f3eef0" /><circle cx="21.500" cy="20.700" r="4" fill="#54444f" /></svg>
      <i class="recording"></i>
      <svg class="siri" viewBox="0 0 28 28"><circle cx="14" cy="14" r="13.500" fill="#33405c" /><path d="M2 12C8 5 17 5 26 9c-5 3-8 11-14 17C5 25 1 19 2 12z" fill="#3f6fd0" opacity=".8" /><path d="M2 17C7 6 14 8 17 13c1 5-3 11-9 12-4-1-6-4-6-8z" fill="#d8487c" opacity=".75" /><path d="M9 3c9-1 16 5 17 12-6-4-8-3-14-3z" fill="#43c9a6" opacity=".75" /><circle cx="13.500" cy="14" r="4" fill="#fff" opacity=".9" /></svg>
      <div class="clock">{@render label('Thu 14 Apr', 136)}{@render label('19:59', 69)}</div>
    </div>
  </header>

  <main class="window">
    <nav class="toolbar">
      <div class="lights"><i class="red"></i><i class="yellow"></i><i class="green"></i></div>
      <svg class="sidebar" viewBox="0 0 39 32"><rect x="1.500" y="1.500" width="36" height="29" rx="5" fill="none" stroke="#e2dfff" stroke-width="2.500" /><path d="M14.500 2v28M5 8h5M5 13h5M5 18h5" stroke="#e2dfff" stroke-width="2.300" /></svg>
      <i class="split"></i>
      <svg class="caret" viewBox="0 0 14 9"><path d="m1.500 1.500 5.500 5.500 5.500-5.500" fill="none" stroke="#f0eeff" stroke-width="2.800" /></svg>
      <svg class="back" viewBox="0 0 16 28"><path d="M14.500 1.500 2 14l12.500 12.500" fill="none" stroke="#e2dfff" stroke-width="2.600" stroke-linecap="round" /></svg>
      <svg class="lt" viewBox="0 0 38 38"><rect width="38" height="38" rx="8" fill="#a9f8fb" /><text class="svgtext slab" x="19" y="21.500" font-size="17" font-weight="700" fill="#5a5fa0" textLength="20">LT</text><path d="m8 28 4-3 4 3.500 4-3.500 4 3.500 3-3 3 2.500" fill="none" stroke="#5a5fa0" stroke-width="3" /></svg>
      <div class="tabs">{#each tabs as tab}<div class="tab">{@render icon(tab)}</div>{/each}</div>
      <div class="address">
        <svg class="siteclose" viewBox="0 0 24 24"><rect width="24" height="24" rx="5" fill="#eeedfa" /><path d="m8 8 8 8M16 8l-8 8" stroke="#8182c4" stroke-width="2.600" /></svg>
        {@render label('teams.microsoft.com', 255)}
        <svg class="lock" viewBox="0 0 20 28"><path d="M4.500 13V7.500c0-7.500 11-7.500 11 0V13" fill="none" stroke="#eeedfa" stroke-width="2" /><rect x="1" y="12.500" width="18" height="14" rx="2.500" fill="#eeedfa" /></svg>
        <div class="hot">{@render icon('micBar')}</div>
        <svg class="dots" viewBox="0 0 30 30"><circle cx="15" cy="15" r="15" fill="#f1f0fb" /><g fill="#8f90d0"><circle cx="8.500" cy="15" r="2.300" /><circle cx="15" cy="15" r="2.300" /><circle cx="21.500" cy="15" r="2.300" /></g></svg>
      </div>
      <div class="tabs">{#each tabsAfter as tab}<div class="tab">{@render icon(tab)}</div>{/each}</div>
      <svg class="share" viewBox="0 0 28 38"><g fill="none" stroke="#dcd9fb" stroke-width="2.300"><path d="M9.500 13.500H4a2.500 2.500 0 0 0-2.500 2.500v18A2.500 2.500 0 0 0 4 36.500h20a2.500 2.500 0 0 0 2.500-2.500V16a2.500 2.500 0 0 0-2.500-2.500h-5.500M14 25V2.500M7.500 8.500 14 2l6.500 6.500" /></g></svg>
      <svg class="plus" viewBox="0 0 28 28"><path d="M14 0v28M0 14h28" stroke="#dcd9fb" stroke-width="2.300" /></svg>
    </nav>

    <section class="stage">
      <div class="presenter">{@render label('Zybina, Kateryna', 175)}</div>
      <div class="shared">
        <div class="titlebar">
          {@render label('SSWU: PHP Camp', 188)}
          <div class="winbtns">
            <svg viewBox="0 0 22 24"><path d="M0 12h22" stroke="#ddd" stroke-width="2" /></svg>
            <svg class="restore" viewBox="0 0 26 26"><path d="M6 6V4a2.500 2.500 0 0 1 2.500-2.500H22A2.500 2.500 0 0 1 24.500 4v15A2.500 2.500 0 0 1 22 21.500" fill="none" stroke="#ddd" stroke-width="2" /><rect x="1.500" y="5" width="19" height="19.500" rx="2.500" fill="none" stroke="#ddd" stroke-width="2" /></svg>
            <svg viewBox="0 0 24 24"><path d="m1 1 22 22M23 1 1 23" stroke="#ddd" stroke-width="1.800" /></svg>
          </div>
        </div>

        <div class="meetbar">
          <div class="shield">{@render icon('shield')}</div>
          {@render label('02:45:03', 88, 'elapsed')}
          <div class="actions">
            {#each meetingActions as a}
              <div class="action" class:active={a.active} style:width="{a.slot}px">{@render icon(a.icon)}{@render label(a.label, a.w)}</div>
            {/each}
            <i class="rule"></i>
            {#each deviceActions as a}
              <div class="action device" style:width="{a.slot}px">{@render icon(a.icon)}{@render label(a.label, a.w)}</div>
            {/each}
          </div>
          <div class="leave">
            <div class="leave-main">{@render icon('phone')}{@render label('Выйти', 71)}</div>
            <div class="leave-more"><svg viewBox="0 0 20 12"><path d="m1.500 1.500 8.500 8.500 8.500-8.500" fill="none" stroke="#fff" stroke-width="2" /></svg></div>
          </div>
        </div>

        <div class="body">
          <div class="gallery">
            {#each people as p}
              <div class="person">
                <div class="face" style:background={p.bg} style:color={p.fg}>{@render label(p.i, p.iw)}</div>
                <div class="name">{@render label(p.n, p.w)}{@render icon('micOff')}</div>
              </div>
            {/each}
            <div class="person"><div class="face rest">+7</div></div>
            <div class="self"><div class="self-face">{@render label('KZ', 46)}</div></div>
          </div>

          <aside class="chat">
            <div class="chat-head">{@render label('Чат собрания', 186)}{@render icon('close')}</div>
            <div class="feed">
              {#each log as m}{@render systemNote(m)}{/each}
              <div class="message">
                <div class="badge">AK<i></i></div>
                <div class="author">{@render label('Artem Kanarskyi (Guest) (гость)', 292)}</div>
                <div class="time">{@render label('19:44', 48)}</div>
                <div class="line">{@render label('в ДЗ можемо її', 166)}</div>
                <div class="line">{@render label('використовувати? чи на', 264)}</div>
                <div class="line">{@render label('чистому Vue?', 148)}</div>
              </div>
              {@render systemNote(lastLog)}
              <div class="own">
                <div class="time">{@render label('19:58', 48)}</div>
                <div class="line">{@render label('@terinaeka', 119)}</div>
                <i class="seen"></i>
              </div>
              <i class="scroll"></i>
            </div>
            <div class="input">{@render label('Введите новое сообщение', 292)}</div>
            <div class="tools">
              {#each composer as name}<div class="tool {name}">{@render icon(name)}</div>{/each}
              <div class="tool send">{@render icon('send')}</div>
            </div>
          </aside>
        </div>

        <div class="taskbar">
          <svg class="streak" viewBox="0 0 150 61"><path d="M6 0c45 10 85 32 112 61h24C118 32 86 10 42 0z" fill="#a9cdf7" opacity=".45" /><path d="M18 0c45 10 80 34 106 61h10C108 32 78 10 34 0z" fill="#cfe4fd" opacity=".8" /></svg>
          <div class="orb">
            <svg viewBox="0 0 62 62"><circle cx="31" cy="31" r="30" fill="url(#gOrb)" stroke="#a9c2da" stroke-width="1.500" /><path d="M17 20c5-4 8-3 13-1l-3 12c-5-2-8-2-13 0z" fill="#e2683a" /><path d="M32 20c5 3 9 2 14 0l-3 12c-5 2-9 2-14-1z" fill="#a2c95b" /><path d="M13 33c5-3 9-2 13 0l-3 12c-4-2-8-3-13 0z" fill="#5fa8e4" /><path d="M28 34c5 2 9 2 14 0l-3 12c-5 2-9 2-14-1z" fill="#f3c94b" /></svg>
          </div>
          <div class="task open w100">
            <svg class="task-icon" viewBox="0 0 56 52"><path d="M4 6h14l3 5h30a2 2 0 0 1 2 2v34a2 2 0 0 1-2 2H4a2 2 0 0 1-2-2V8z" fill="#f0d98a" /><path d="M12 8h38v12H12z" fill="#fff" /><path d="M2 17h52v28a4 4 0 0 1-4 4H6a4 4 0 0 1-4-4z" fill="#f7e6a4" /><path d="M7 4h6v5H7z" fill="#5ca24a" /><path d="M22 6h6v5h-6z" fill="#cf5a3c" /><path d="M34 10h6v4h-6z" fill="#4a86c8" /><path d="M11 50V33a4 4 0 0 1 4-4h28a4 4 0 0 1 4 4v17h-9V39H20v11z" fill="#8ccbee" stroke="#d7f0fc" stroke-width="2" /></svg>
          </div>
          <div class="task w98"><svg class="task-icon" viewBox="4 4 80 80">{@render chromeMark()}</svg></div>
          <div class="task w113">{@render office('X', '#1e6b41', '#4fb583', '#338a5c')}</div>
          <div class="task open w92 stack">
            <svg class="task-icon" viewBox="0 0 56 52"><circle cx="31" cy="26" r="24" fill="#ec8663" /><path d="M31 2a24 24 0 0 1 24 24H31z" fill="#f4ab8d" /><path d="M7 26h48a24 24 0 0 1-48 0z" fill="#cf6540" /><rect x="1" y="12" width="28" height="28" rx="2.500" fill="#bb4628" /><text class="svgtext light" x="15" y="34" font-size="22" font-weight="700">P</text></svg>
          </div>
          <div class="task open w100">{@render office('W', '#2250ad', '#5199ea', '#2f6bd2')}</div>
          <div class="task open bright w92 stack">
            <svg class="task-icon" viewBox="0 0 56 52"><circle cx="31" cy="8" r="7" fill="#7a80dc" /><circle cx="48" cy="11" r="6" fill="#545ac0" /><path d="M38 19h17v16c0 9-9 12-15 8z" fill="#545ac0" /><path d="M20 19h24v20c0 15-24 15-24 0z" fill="#7b82e4" /><rect x="1" y="12" width="28" height="28" rx="2.500" fill="#464cb4" /><text class="svgtext light" x="15" y="34" font-size="22" font-weight="700">T</text><circle cx="45" cy="42" r="8.500" fill="#fff" stroke="#9aa0a8" stroke-width="2" /></svg>
          </div>
          <div class="task open w100"><svg class="task-icon" viewBox="4 4 80 80">{@render chromeMark()}<circle cx="66" cy="64" r="20" fill="#241a10" /><path d="M60 50c9-4 14 4 13 14l3 16-14 3c4-10 3-16 0-20z" fill="#b8873f" /></svg></div>
          <div class="task open w100"><svg class="task-icon" viewBox="0 0 54 54"><rect width="54" height="54" rx="5" fill="#454647" /><path d="M13 20 41 9v11L27 26l14 6v9L13 45V36l13-5-13-4z" fill="#f0982f" /></svg></div>
          <div class="tray">
            <span class="lang">{@render label('EN', 24)}</span>
            <svg class="up" viewBox="0 0 14 8"><path d="m7 0 7 8H0z" /></svg>
            <svg viewBox="0 0 26 28"><path d="M1.500 1v26M3 3c5-3 9 3 20 1v9c-9 2-13-3-20 0z" fill="#fff" stroke="#fff" stroke-width="2" /><circle cx="18" cy="18" r="8.500" fill="#d3402f" /><path d="m14 14 8 8m0-8-8 8" stroke="#fff" stroke-width="2.500" /></svg>
            <svg viewBox="0 0 26 28"><rect x="2" y="4" width="15" height="22" rx="2" fill="none" stroke="#fff" stroke-width="3" /><path d="M12 10h12v6c0 5-4 6-5 6v5h-3v-5c-2 0-4-1-4-6zM14 3h3v6h-3zM20 3h3v6h-3z" fill="#fff" stroke="#26508b" /></svg>
            <svg viewBox="0 0 26 28"><path d="M0 20h3v4H0zM4.500 17.500h3V24h-3zM9 14.500h3V24H9zM13.500 11.500h3V24h-3zM18 8h3v16h-3zM22.500 4h3v20h-3z" /></svg>
            <svg viewBox="0 0 26 28"><path d="M2 10h4l6-8v24l-6-8H2z" /><path d="M16.500 9c3 3 3 7 0 10" fill="none" stroke="#fff" stroke-width="2" /></svg>
            <div class="when"><span>{@render label('19:59', 47)}</span><span>{@render label('14.04.2022', 93)}</span></div>
            <i class="peek"></i>
          </div>
        </div>
      </div>

      <div class="controls">
        <div class="timer">{@render label('55:05', 67)}</div>
        <div class="ctl">{@render icon('cameraOff')}</div>
        <div class="ctl">{@render icon('micOff')}</div>
        <div class="ctl">{@render icon('shareUp')}</div>
        <div class="ctl dots3">{@render icon('more')}</div>
        <div class="ctl deep">{@render icon('raise')}</div>
        <div class="ctl deep">{@render icon('chat')}<i class="unread"></i></div>
        <div class="ctl deep">{@render icon('people')}</div>
        <div class="ctl hang">{@render icon('phone')}</div>
      </div>
    </section>

    <section class="strip">
      <div class="crowd">
        <div class="dot more5">+5</div>
        {#each strip as p}<div class="dot" style:background={p.bg} style:color={p.fg}>{p.i}</div>{/each}
      </div>
      {#each tiles as p}
        <div class="tile" class:speaking={p.speaking}>
          <div class="dot big" style:background={p.bg} style:color={p.fg}>{p.i}</div>
          <div class="who" class:wide={p.wide}>{@render label(p.n, p.w)}{#if !p.speaking}{@render icon('micOff')}{/if}</div>
        </div>
      {/each}
    </section>
  </main>

  <footer class="dock">
    {#each dock as [name, running]}
      <div class="slot">{@render dockIcon(name)}{#if running}<i></i>{/if}</div>
    {/each}
    <i class="bar"></i>
    <svg class="trash" viewBox="0 0 84 104"><path d="M6 16 18 4l12 5 4-8 10 9 10-8 6 9 8-3 12 12-4 10H12z" fill="#e4e7e9" /><path d="m20 8 10 14M46 6l6 16M66 12l-8 10M34 6l-6 14" stroke="#4f5a66" stroke-width="3" /><path d="m30 14 8-3 4 8z" fill="#49a0b9" /><path d="m50 12 8 6-10 4z" fill="#a2443a" /><path d="M12 14l8 8-4 2z" fill="#7c8288" /><path d="M3 16c10 9 68 9 78 0l-10 80c-2 9-56 9-58 0z" fill="url(#gTrash)" opacity=".94" /><ellipse cx="42" cy="15" rx="39.500" ry="8" fill="none" stroke="#d8dadb" stroke-width="2" /><path d="m20 26 12 20 14-14 10 26M24 60l14 12 20-16" fill="none" stroke="#fff" stroke-width="2" opacity=".3" /></svg>
  </footer>

  <svg class="cursor" viewBox="0 0 24 36"><path d="M1.500 2v27l6.500-6 4.500 11 5-2.200-4.700-10.800H22z" fill="#000" stroke="#fff" stroke-width="2" /></svg>
</div>

<style>
  :global(body) { background: #0e1419; overflow: hidden; }
  .screen { position: relative; width: 2880px; height: 1800px; overflow: hidden; display: flex; flex-direction: column; font-family: 'Noto Sans', 'Open Sans', sans-serif; color: #fff; }
  .screen :global(*) { box-sizing: border-box; }
  svg { display: block; flex: none; }
  i { display: block; flex: none; }
  .label { display: inline-block; white-space: nowrap; flex: none; }
  .icon { fill: currentColor; overflow: visible; }
  .icon.line { fill: none; stroke: currentColor; stroke-width: 1.4; stroke-linejoin: round; stroke-linecap: round; }
  .icon .stroke { fill: none; stroke: currentColor; stroke-width: 1.5; stroke-linecap: round; }
  .icon .slash { fill: none; stroke: currentColor; stroke-width: 1.4; stroke-linecap: round; }
  .icon .full { fill: currentColor; stroke: none; }
  .icon .soft { fill: currentColor; opacity: .55; stroke: none; }
  .icon .cut { fill: none; stroke: #232323; stroke-width: 1.9; }
  .svgtext { text-anchor: middle; stroke: none; font-family: 'Open Sans', sans-serif; }
  .icon.line .svgtext { fill: currentColor; }
  .svgtext.light { fill: #fff; }
  .svgtext.ink { fill: #1e1e1e; font-family: Inter, sans-serif; }
  .svgtext.fat { stroke: #fff; stroke-width: 3; stroke-linejoin: round; }
  .svgtext.slab { font-family: 'Liberation Mono', monospace; }
  .svgtext.dim { fill: #75504f; }

  .wallpaper { position: absolute; left: 0; top: 1620px; width: 2880px; height: 180px; }

  .menubar { height: 48px; flex: none; display: flex; align-items: center; gap: 42px; padding-left: 39px; font: 500 25px/48px Inter, sans-serif; color: #f8f1f0; text-shadow: 0 2px 4px rgb(0 0 0 / .2); background: linear-gradient(90deg, #b87564, #a5695f 25%, #835759 50%, #5f4a53 75%, #49404f); }
  .apple { width: 26px; height: 32px; fill: #f8f1f0; margin-top: -5px; }
  .strong { font-weight: 700; }
  .extras { margin-left: auto; margin-right: 25px; display: grid; align-items: center; justify-items: center; height: 48px; grid-template-columns: 68px 82px 98px 72px 65px 72px 66px 74px 148px 82px 65px 72px 37px 20px 66px 248px; }
  .extra { display: flex; align-items: center; }
  .skypeBar .icon, .boltBar .icon { width: 33px; height: 33px; }
  .mic .icon { width: 22px; height: 29px; }
  .dockerBar .icon { width: 36px; height: 30px; }
  .telegramBar .icon { width: 40px; height: 40px; margin-top: 6px; margin-left: 3px; }
  .playBar .icon { width: 28px; height: 28px; }
  .bluetooth .icon { width: 20px; height: 28px; }
  .dotsFace .icon { width: 32px; height: 20px; }
  .battery { gap: 10px; }
  .battery svg { width: 50px; height: 25px; overflow: visible; }
  .flag { width: 32px; height: 32px; }
  .wifi { width: 34px; height: 25px; }
  .user { width: 28px; height: 28px; }
  .toggles { width: 28px; height: 27px; }
  .recording { width: 10px; height: 10px; border-radius: 50%; background: #d98a35; }
  .siri { width: 28px; height: 28px; }
  .clock { display: flex; gap: 17px; }

  .window { margin-top: 2px; height: 1597px; flex: none; border-radius: 20px; overflow: hidden; display: flex; flex-direction: column; position: relative; box-shadow: 0 0 0 1px #3a3838; }
  .toolbar { height: 104px; flex: none; display: flex; align-items: center; background: #6264a2; border-top: 2px solid #a9a7cc; padding: 0 0 2px 40px; }
  .lights { display: flex; gap: 15px; margin-right: 51px; }
  .lights i { width: 25px; height: 25px; border-radius: 50%; }
  .red { background: #ec6a5e; } .yellow { background: #f4bf4f; } .green { background: #61c554; }
  .sidebar { width: 39px; height: 32px; margin-top: -2px; }
  .split { width: 1px; height: 36px; background: #7f80b8; margin: 0 11px 0 13px; }
  .caret { width: 14px; height: 9px; margin-right: 48px; }
  .back { width: 16px; height: 28px; margin-right: 48px; margin-top: -1px; }
  .lt { width: 38px; height: 38px; margin-right: 26px; }
  .tabs { display: flex; gap: 8px; }
  .tab { width: 76px; height: 56px; border-radius: 13px; background: #7475b1; display: flex; align-items: center; justify-content: center; }
  .fav { width: 36px; height: 36px; }
  .address { width: 480px; height: 56px; border-radius: 13px; background: #9798d6; margin: 0 16px; padding-left: 18px; display: flex; align-items: center; font: 500 26px/56px Inter, sans-serif; }
  .siteclose { width: 24px; height: 24px; margin-right: 18px; }
  .lock { width: 20px; height: 28px; margin-left: 14px; }
  .hot { margin-left: 39px; color: #e2544c; }
  .hot .icon { width: 19px; height: 25px; }
  .dots { width: 30px; height: 30px; margin-left: 20px; }
  .share { width: 28px; height: 38px; margin: -5px 45px 0 30px; }
  .plus { width: 28px; height: 28px; margin-top: -3px; }

  .stage { position: relative; height: 1306px; flex: none; background: #000; display: flex; }
  .presenter { width: 278px; padding-left: 64px; align-self: flex-end; padding-bottom: 34px; font-size: 24px; line-height: 34px; }
  .shared { width: 2324px; height: 1306px; border: solid #cf3b30; border-width: 5px 5px 6px 6px; background: #1f1f1f; display: flex; flex-direction: column; }
  .titlebar { position: relative; height: 62px; flex: none; background: #0a0a0a; display: flex; align-items: center; justify-content: center; font-size: 24px; padding-bottom: 9px; color: #ececec; }
  .winbtns { position: absolute; right: 18px; top: 14px; display: flex; gap: 44px; }
  .winbtns svg { width: 22px; height: 24px; }
  .winbtns .restore { width: 26px; height: 26px; }
  .meetbar { height: 100px; flex: none; background: #242424; display: flex; align-items: center; padding: 0 32px 0 41px; border-bottom: 1px solid #1b1b1b; }
  .shield { margin-right: 28px; color: #e0e0e0; }
  .shield .icon { width: 33px; height: 36px; stroke-width: 2; }
  .elapsed { font-size: 24px; font-weight: 500; }
  .actions { margin-left: auto; display: flex; height: 100px; align-items: stretch; margin-right: 26px; }
  .action { display: flex; flex-direction: column; align-items: center; padding-top: 18px; color: #cfcfcf; font-size: 19px; line-height: 26px; position: relative; }
  .action .icon { width: 36px; height: 36px; margin-bottom: 7px; }
  .device { color: #fff; font-weight: 500; }
  .active::after { content: ''; position: absolute; bottom: 2px; width: 54px; height: 4px; background: #9ea2de; box-shadow: 0 0 6px #4d508f; }
  .rule { width: 1px; height: 56px; background: #555; margin: 22px 22px 0 23px; }
  .leave { width: 212px; height: 56px; border-radius: 5px; display: flex; background: #c34a50; font-size: 24px; font-weight: 700; line-height: 54px; }
  .leave-main { width: 158px; display: flex; align-items: center; justify-content: center; gap: 13px; border-right: 1px solid #e08b8e; }
  .leave-main .icon { width: 35px; height: 35px; }
  .leave-more { flex: 1; display: flex; align-items: center; justify-content: center; }
  .leave-more svg { width: 20px; height: 12px; }

  .body { height: 1072px; flex: none; display: grid; grid-template-columns: 1774px 539px; }
  .gallery { position: relative; padding: 74px 0 0 8px; display: grid; grid-template-columns: repeat(5, 350.5px); grid-auto-rows: 381px; align-content: start; }
  .person { display: flex; flex-direction: column; align-items: center; }
  .face { width: 252px; height: 252px; border-radius: 50%; display: flex; align-items: center; justify-content: center; font-size: 98px; font-weight: 600; line-height: 1; padding-bottom: 5px; }
  .face.rest { background: #3b3b3b; border: 2px solid #505050; font-size: 24px; font-weight: 500; padding: 0; }
  .name { margin-top: 23px; height: 30px; display: flex; align-items: center; gap: 17px; font-size: 21.500px; font-weight: 500; line-height: 30px; }
  .name .icon { width: 21px; height: 21px; }
  .self { position: absolute; left: 1355px; top: 836px; width: 410px; height: 227px; background: #3c3c3c; display: flex; align-items: center; justify-content: center; }
  .self-face { width: 96px; height: 96px; border-radius: 50%; background: #d3e0d8; color: #204434; font-size: 38px; font-weight: 500; display: flex; align-items: center; justify-content: center; }

  .chat { border-left: 2px solid #141414; display: flex; flex-direction: column; min-width: 0; }
  .chat-head { height: 105px; flex: none; display: flex; align-items: center; justify-content: space-between; padding: 7px 46px 0 34px; border-bottom: 2px solid #141414; font-size: 27px; font-weight: 700; }
  .chat-head .icon { width: 21px; height: 21px; color: #c8c8c8; }
  .feed { position: relative; height: 822px; flex: none; overflow: hidden; padding: 0 35px 0 34px; display: flex; flex-direction: column; }
  .note { display: flex; margin-bottom: 16.500px; }
  .note:first-child { margin-top: -13px; }
  .note-icon { width: 51px; margin-left: 14px; padding-top: 2px; color: #a0a0a0; }
  .note-icon .icon { width: 30px; height: 30px; }
  .note-icon .icon.line { stroke-width: 1.8; }
  .note-icon .icon .cut { stroke-width: 2.2; }
  .note-text { font-size: 20.500px; font-weight: 600; line-height: 25.600px; color: #a3a2a2; }
  .message { position: relative; margin: 13px 0 28px 38px; width: 393px; height: 201px; flex: none; border-radius: 6px; background: #292929; padding: 16px 0 0 27px; }
  .badge { position: absolute; left: -38px; top: 17px; width: 55px; height: 55px; border-radius: 50%; background: #e9dedb; color: #6b5145; font-size: 20px; font-weight: 600; display: flex; align-items: center; justify-content: center; }
  .badge i { position: absolute; right: -2px; bottom: -2px; width: 22px; height: 22px; border-radius: 50%; background: #fff; border: 3px solid #1a1c20; }
  .author { font-size: 21.500px; font-weight: 600; line-height: 33px; color: #cdcdcd; }
  .time { font-size: 22px; line-height: 34px; color: #a9a9a9; }
  .line { font-size: 23.500px; font-weight: 600; line-height: 34px; color: #f0f0f0; }
  .own { position: relative; align-self: flex-end; margin: 14px -4px 0 0; width: 174px; height: 98px; flex: none; border-radius: 6px; background: #302f4b; padding: 15px 0 0 28px; }
  .seen { position: absolute; right: -14px; bottom: 7px; width: 8px; height: 14px; border-left: 2px solid #8f90d8; border-radius: 8px 0 0 8px; }
  .scroll { position: absolute; right: 1px; top: 577px; width: 14px; height: 187px; border-radius: 7px; background: #7b7b7b; }
  .input { margin: 0 31px 0 34px; height: 72px; flex: none; background: #292929; border-radius: 6px; border-bottom: 4px solid #9a9ccf; box-shadow: 0 0 0 1px #151515; padding-left: 28px; display: flex; align-items: center; font-size: 24px; color: #a3a3a3; }
  .tools { display: flex; padding: 16px 42px 0 33px; color: #c9c9c9; }
  .tool { width: 54.400px; display: flex; justify-content: center; }
  .tool .icon { width: 28px; height: 28px; }
  .tool .icon.line { stroke-width: 1.7; }
  .tool.more .icon { width: 22px; }
  .tool.send { width: 28px; margin-left: auto; }

  .taskbar { position: relative; height: 61px; flex: none; display: flex; align-items: stretch; border-top: 2px solid #7fa9d6; background: linear-gradient(90deg, #35619a 0, #3d72ae 90px, #5aa2d6 130px, #4c9ad6 500px, #4089ce 900px, #3a7cc8 1350px, #3266b8 1650px, #2d5fab 1830px, #214380 1930px, #1e3f78); }
  .streak { position: absolute; left: 1522px; top: -2px; width: 150px; height: 61px; }
  .orb { width: 78px; padding-left: 9px; margin-right: 17px; }
  .orb svg { width: 61px; height: 61px; }
  .task { height: 59px; display: flex; align-items: center; justify-content: center; position: relative; padding-top: 2px; }
  .open { border: 1px solid #1f4a78; background: linear-gradient(160deg, rgb(255 255 255 / .55), rgb(255 255 255 / .15) 50%, rgb(255 255 255 / .4)); box-shadow: inset 0 0 0 1px rgb(255 255 255 / .5); border-radius: 3px; margin-right: 5px; }
  .bright { background: linear-gradient(160deg, rgb(255 255 255 / .6), rgb(255 255 255 / .85)); }
  .open.stack { margin-right: 13px; }
  .stack::after { content: ''; position: absolute; right: -9px; top: 0; width: 7px; height: 58px; border: 1px solid #1f4a78; border-left-color: #9cc6ea; background: rgb(255 255 255 / .35); border-radius: 0 3px 3px 0; }
  .w100 { width: 101px; } .w98 { width: 98px; } .w113 { width: 113px; } .w92 { width: 92px; }
  .task-icon { width: 54px; height: 52px; }
  .tray { margin-left: auto; display: flex; align-items: center; font-size: 21px; color: #eef4fb; }
  .tray svg { width: 26px; height: 28px; fill: #fff; margin-right: 15px; margin-top: 7px; }
  .tray svg.up { width: 14px; height: 8px; margin: 9px 22px 0 28px; }
  .lang { line-height: 28px; margin-top: -4px; }
  .when { display: flex; flex-direction: column; align-items: center; line-height: 28px; width: 93px; margin: 0 21px 0 13px; }
  .peek { width: 19px; height: 59px; border-left: 2px solid #9db7d6; background: linear-gradient(150deg, #8aa3c4, #1c3767 40%, #1f447f); }

  .controls { position: absolute; left: 885px; top: 1130px; width: 970px; height: 104px; border-radius: 8px; overflow: hidden; display: flex; box-shadow: 0 3px 14px rgb(0 0 0 / .5); }
  .timer { width: 138px; background: #3b393a; border-right: 2px solid #242323; display: flex; align-items: center; justify-content: center; font-size: 28px; color: #a3a1a2; }
  .ctl { flex: 1; background: #3b393a; display: flex; align-items: center; justify-content: center; position: relative; }
  .ctl .icon { width: 42px; height: 42px; }
  .dots3 .icon { width: 36px; }
  .ctl.dots3 .icon { transform: scale(1.08); }
  .ctl.deep { background: #292829; }
  .ctl.hang { background: #943543; }
  .unread { position: absolute; right: 25px; top: 26px; width: 18px; height: 18px; border-radius: 50%; background: #d97a50; }

  .strip { height: 187px; flex: none; display: flex; background: #1c1a1b; }
  .crowd { width: 1440px; display: flex; align-items: flex-start; padding: 52px 0 0 138px; gap: 84px; }
  .dot { width: 84px; height: 84px; flex: none; border-radius: 50%; display: flex; align-items: center; justify-content: center; font-size: 34px; font-weight: 500; line-height: 1; padding-bottom: 1px; }
  .big { width: 88px; height: 88px; font-size: 35px; }
  .crowd .more5 { width: 88px; height: 88px; background: #6163a2; font-size: 30px; margin-right: -4px; }
  .tile { width: 360px; display: flex; flex-direction: column; align-items: center; padding-top: 50px; background: #3a3939; }
  .tile:nth-child(3) { background: #363636; }
  .tile:nth-child(4) { background: #333132; }
  .tile.speaking { background: radial-gradient(circle 180px at 50% 50%, #6e6cab 0, #5f5d96 36%, #4a4869 58%, #403e52 80%, #3a3848 100%); }
  .speaking .big { box-shadow: 0 0 0 4px #2e2c40, 0 0 0 10px #9c9bfa, 0 8px 22px 8px rgb(20 18 40 / .4); }
  .who { align-self: stretch; padding-left: 30px; margin-top: 15px; display: flex; align-items: center; gap: 16px; font-size: 24px; line-height: 34px; text-shadow: 0 1px 3px #000; }
  .who.wide { gap: 25px; }
  .who .icon { width: 28px; height: 28px; }

  .dock { position: relative; width: 2072px; height: 140px; flex: none; margin: 3px auto 0; border-radius: 42px; border: 2px solid #86888d; background: linear-gradient(90deg, #69676a, #65646b 40%, #62666f 60%, #5d6569); display: flex; padding-left: 4px; }
  .slot { width: 118px; display: flex; justify-content: center; position: relative; padding-top: 12px; }
  .app { width: 100px; height: 100px; overflow: visible; filter: drop-shadow(0 2px 3px rgb(0 0 0 / .3)); }
  .slot i { position: absolute; bottom: 2px; width: 8px; height: 8px; border-radius: 50%; background: #000; }
  .bar { width: 2px; height: 104px; margin: 16px 44px 0 28px; background: #34373b; }
  .trash { width: 80px; height: 102px; margin-top: 11px; }

  .cursor { position: absolute; left: 1991px; top: 139px; width: 24px; height: 36px; }
</style>
